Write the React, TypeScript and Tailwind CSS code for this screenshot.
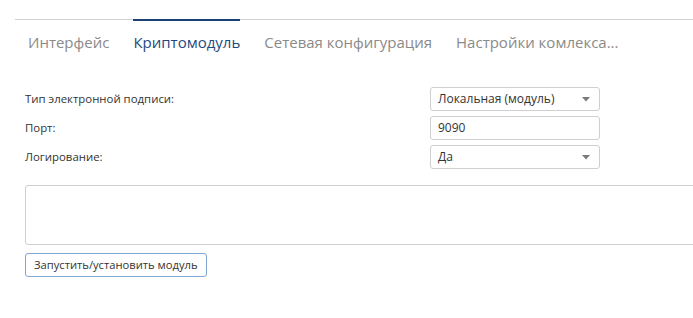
import React from "react";

const Arrow = () => (
  <svg width="8" height="5" viewBox="0 0 8 5" className="shrink-0">
    <path d="M0 0 L8 0 L4 4.5 Z" fill="#7a7a7a" />
  </svg>
);

export default function App() {
  const tabs = ["Интерфейс", "Криптомодуль", "Сетевая конфигурация", "Настройки комлекса..."];
  return (
    <div className="w-[693px] h-[318px] overflow-hidden bg-white" style={{ fontFamily: '"Open Sans", "Noto Sans", sans-serif' }}>
      <div className="pl-[15px] pt-[19px]">
        <div className="border-t border-[#d2d2d2] flex pl-[13px] gap-[24px]">
          {tabs.map((t, i) => (
            <div key={t} className="relative pt-[10px]">
              {i === 1 && <div className="absolute left-0 right-0 top-[-1px] h-[2px] bg-[#1c4275]" />}
              <span className={"text-[15px] leading-[22px] whitespace-nowrap " + (i === 1 ? "text-[#1f4a80]" : "text-[#8a8a8a]")}>{t}</span>
            </div>
          ))}
        </div>
      </div>
      <div className="pl-[25px] pt-[33px]">
        <div className="flex flex-col gap-[5px]">
          <div className="flex items-center h-[24px]">
            <div className="w-[405px] text-[11.4px] text-[#333]">Тип электронной подписи:</div>
            <div className="w-[170px] h-[24px] border border-[#cfcfcf] rounded-[3px] flex items-center justify-between pl-[7px] pr-[9px] text-[12px] text-[#333]">
              <span>Локальная (модуль)</span>
              <Arrow />
            </div>
          </div>
          <div className="flex items-center h-[24px]">
            <div className="w-[405px] text-[11.4px] text-[#333]">Порт:</div>
            <div className="w-[170px] h-[24px] border border-[#cfcfcf] rounded-[3px] flex items-center pl-[7px] text-[12px] text-[#333]">
              9090
            </div>
          </div>
          <div className="flex items-center h-[24px]">
            <div className="w-[405px] text-[11.4px] text-[#333]">Логирование:</div>
            <div className="w-[170px] h-[24px] border border-[#cfcfcf] rounded-[3px] flex items-center justify-between pl-[7px] pr-[9px] text-[12px] text-[#333]">
              <span>Да</span>
              <Arrow />
            </div>
          </div>
        </div>
        <div className="mt-[16px] w-[700px] h-[60px] border border-[#cfcfcf] rounded-[3px]" />
        <div className="mt-[8px] inline-flex items-center h-[24px] px-[8px] border border-[#7fa7d4] rounded-[3px] text-[11.2px] text-[#333] whitespace-nowrap">
          Запустить/установить модуль
        </div>
      </div>
    </div>
  );
}
